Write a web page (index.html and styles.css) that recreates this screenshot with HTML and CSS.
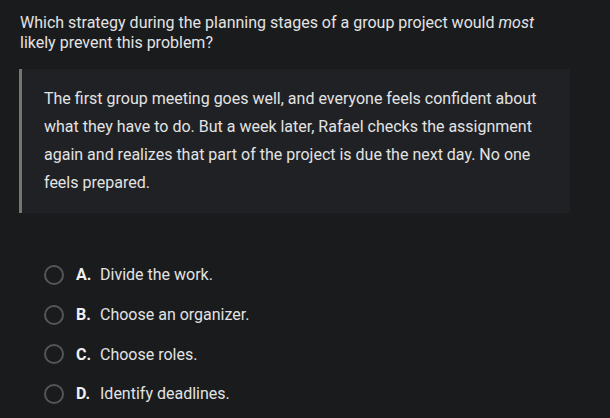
FILE: index.html
```html
<!DOCTYPE html>
<html>
<head>
<meta charset="utf-8">
<link rel="stylesheet" href="styles.css">
</head>
<body>
<div class="page">
  <p class="question">Which strategy during the planning stages of a group project would <em>most</em> likely prevent this problem?</p>
  <blockquote class="passage">The first group meeting goes well, and everyone feels confident about what they have to do. But a week later, Rafael checks the assignment again and realizes that part of the project is due the next day. No one feels prepared.</blockquote>
  <ul class="options">
    <li class="option"><span class="radio"></span><span class="letter">A.</span><span class="text">Divide the work.</span></li>
    <li class="option"><span class="radio"></span><span class="letter">B.</span><span class="text">Choose an organizer.</span></li>
    <li class="option"><span class="radio"></span><span class="letter">C.</span><span class="text">Choose roles.</span></li>
    <li class="option"><span class="radio"></span><span class="letter">D.</span><span class="text">Identify deadlines.</span></li>
  </ul>
</div>
</body>
</html>
```
FILE: styles.css
```css
html, body {
  margin: 0;
  padding: 0;
  background: #1a1b1d;
}
body {
  font-family: Roboto, "Liberation Sans", sans-serif;
  color: #e3e3e3;
  width: 610px;
  height: 418px;
  overflow: hidden;
}
.page {
  padding: 13px 0 0 0;
}
.question {
  margin: 0;
  padding: 0 20px;
  font-size: 16px;
  line-height: 20px;
  width: 540px;
}
.question em {
  font-style: italic;
}
.passage {
  margin: 16px 0 0 19px;
  width: 504px;
  padding: 16px 22px 16px 22px;
  background: #202124;
  border-left: 3px solid #77766c;
  font-size: 16px;
  line-height: 28px;
  color: #e3e3e3;
}
.options {
  list-style: none;
  margin: 42px 0 0 0;
  padding: 0;
}
.option {
  display: flex;
  align-items: center;
  height: 39.7px;
  font-size: 16px;
}
.radio {
  box-sizing: border-box;
  width: 20px;
  height: 20px;
  border: 2px solid #55565a;
  border-radius: 50%;
  margin-left: 44px;
}
.letter {
  font-weight: 700;
  color: #f0f0f0;
  margin-left: 12px;
  width: 24px;
}
.text {
  color: #e3e3e3;
}
```
